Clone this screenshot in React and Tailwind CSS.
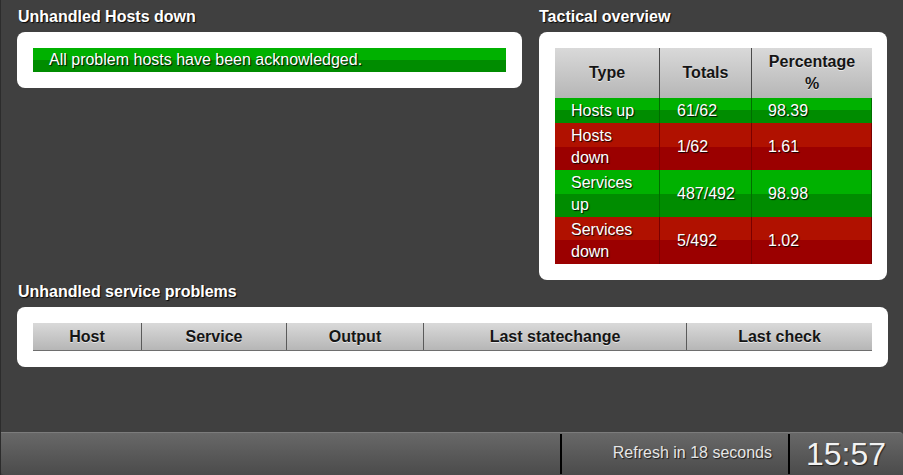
const tactical = [
  { type: 'Hosts up', total: '61/62', pct: '98.39', ok: true },
  { type: 'Hosts down', total: '1/62', pct: '1.61', ok: false },
  { type: 'Services up', total: '487/492', pct: '98.98', ok: true },
  { type: 'Services down', total: '5/492', pct: '1.02', ok: false },
];

const serviceCols = [
  { name: 'Host', w: 'w-[108px]' },
  { name: 'Service', w: 'w-[145px]' },
  { name: 'Output', w: 'w-[137px]' },
  { name: 'Last statechange', w: 'w-[263px]' },
  { name: 'Last check', w: 'flex-1' },
];

const App = () => {
  return (
    <div className="w-[903px] h-[475px] flex flex-col bg-[#404040] border-l border-[#2c2c2c] font-['Liberation_Sans',Arial,sans-serif] text-[16px] overflow-hidden">
      <main className="pt-[8px] pl-[16px] pr-[16px]">
        <div className="flex items-start gap-[17px]">
          {/* Unhandled hosts */}
          <section className="w-[505px]">
            <h2 className="font-bold leading-[18px] text-white [text-shadow:1px_1px_1px_rgba(0,0,0,0.9)] mb-[6px] pl-[1px]">
              Unhandled Hosts down
            </h2>
            <div className="bg-white rounded-[8px] p-[16px]">
              <div className="h-[24px] leading-[24px] pl-[16px] text-white bg-[linear-gradient(to_bottom,#00b100_50%,#008c00_50%)] [text-shadow:1px_1px_1px_rgba(0,0,0,0.9)]">
                All problem hosts have been acknowledged.
              </div>
            </div>
          </section>

          {/* Tactical overview */}
          <section className="w-[348px]">
            <h2 className="font-bold leading-[18px] text-white [text-shadow:1px_1px_1px_rgba(0,0,0,0.9)] mb-[6px]">
              Tactical overview
            </h2>
            <div className="bg-white rounded-[8px] pt-[16px] pl-[16px] pr-[15px] pb-[16px]">
              <div className="flex bg-[linear-gradient(to_bottom,#d9d9d9,#b6b6b6)] text-[#151515] font-bold leading-[22px] text-center [text-shadow:0_1px_0_rgba(255,255,255,0.6)]">
                <div className="w-[104px] py-[3px] flex items-center justify-center">Type</div>
                <div className="w-[92px] py-[3px] border-l border-[#4a4a4a] flex items-center justify-center">Totals</div>
                <div className="flex-1 py-[3px] border-l border-[#4a4a4a] px-[10px]">Percentage %</div>
              </div>
              {tactical.map((row) => (
                <div
                  key={row.type}
                  className={`flex text-white leading-[22px] border-r [text-shadow:1px_1px_1px_rgba(0,0,0,0.9)] ${
                    row.ok
                      ? 'bg-[linear-gradient(to_bottom,#00b100_50%,#008c00_50%)] border-[#006e00]'
                      : 'bg-[linear-gradient(to_bottom,#b01100_50%,#9b0000_50%)] border-[#7a0000]'
                  }`}
                >
                  <div className="w-[104px] py-[1.5px] pl-[16px] pr-[14px] flex items-center">{row.type}</div>
                  <div className={`w-[92px] py-[1.5px] pl-[17px] border-l flex items-center ${row.ok ? 'border-[#006e00]' : 'border-[#7a0000]'}`}>
                    {row.total}
                  </div>
                  <div className={`flex-1 py-[1.5px] pl-[16px] border-l flex items-center ${row.ok ? 'border-[#006e00]' : 'border-[#7a0000]'}`}>
                    {row.pct}
                  </div>
                </div>
              ))}
            </div>
          </section>
        </div>

        {/* Unhandled service problems */}
        <section className="mt-[3px] mr-[-1px]">
          <h2 className="font-bold leading-[18px] text-white [text-shadow:1px_1px_1px_rgba(0,0,0,0.9)] mb-[6px] pl-[1px]">
            Unhandled service problems
          </h2>
          <div className="bg-white rounded-[8px] pt-[16px] pb-[16px] pl-[16px] pr-[16px]">
            <div className="flex h-[28px] bg-[linear-gradient(to_bottom,#d9d9d9,#b6b6b6)] border-b border-[#6e6e6e] text-[#151515] font-bold leading-[27px] text-center [text-shadow:0_1px_0_rgba(255,255,255,0.6)]">
              {serviceCols.map((col, i) => (
                <div key={col.name} className={`${col.w} ${i > 0 ? 'border-l border-[#5a5a5a]' : ''}`}>
                  {col.name}
                </div>
              ))}
            </div>
          </div>
        </section>
      </main>

      <div className="flex-1" />

      {/* Footer */}
      <footer className="h-[43px] flex items-stretch border-t border-[#7c7c7c] bg-[linear-gradient(to_bottom,#686868,#4b4b4b)] rounded-tr-[4px] rounded-bl-[4px]">
        <div className="w-[559px]" />
        <div className="w-[2px] my-[1px] bg-black" />
        <div className="w-[226px] flex items-center justify-end pr-[16px] pb-[3px] text-[#e6e6e6] [text-shadow:1px_1px_1px_rgba(0,0,0,0.7)]">
          Refresh in 18 seconds
        </div>
        <div className="w-[2px] my-[1px] bg-black" />
        <div className="flex-1 flex items-center pl-[16px] text-[32px] leading-none text-[#f2f2f2] [text-shadow:1px_1px_1px_rgba(0,0,0,0.6)]">
          15:57
        </div>
      </footer>
    </div>
  );
};

export default App;
